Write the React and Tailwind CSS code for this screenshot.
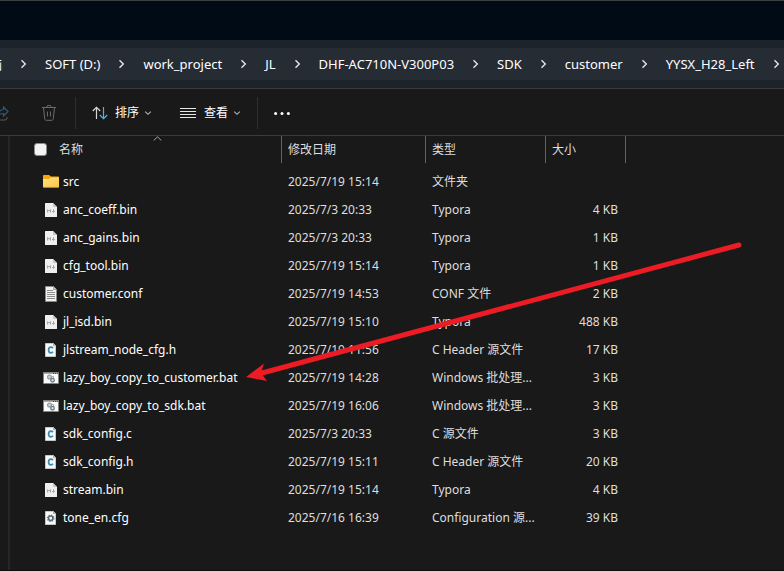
import { Fragment } from "react";

const FILES = [
  { icon: "folder", name: "src", date: "2025/7/19 15:14", type: "文件夹", size: "" },
  { icon: "md", name: "anc_coeff.bin", date: "2025/7/3 20:33", type: "Typora", size: "4 KB" },
  { icon: "md", name: "anc_gains.bin", date: "2025/7/3 20:33", type: "Typora", size: "1 KB" },
  { icon: "md", name: "cfg_tool.bin", date: "2025/7/19 15:14", type: "Typora", size: "1 KB" },
  { icon: "text", name: "customer.conf", date: "2025/7/19 14:53", type: "CONF 文件", size: "2 KB" },
  { icon: "md", name: "jl_isd.bin", date: "2025/7/19 15:10", type: "Typora", size: "488 KB" },
  { icon: "c", name: "jlstream_node_cfg.h", date: "2025/7/19 11:56", type: "C Header 源文件", size: "17 KB" },
  { icon: "bat", name: "lazy_boy_copy_to_customer.bat", date: "2025/7/19 14:28", type: "Windows 批处理...", size: "3 KB" },
  { icon: "bat", name: "lazy_boy_copy_to_sdk.bat", date: "2025/7/19 16:06", type: "Windows 批处理...", size: "3 KB" },
  { icon: "c", name: "sdk_config.c", date: "2025/7/3 20:33", type: "C 源文件", size: "3 KB" },
  { icon: "c", name: "sdk_config.h", date: "2025/7/19 15:11", type: "C Header 源文件", size: "20 KB" },
  { icon: "md", name: "stream.bin", date: "2025/7/19 15:14", type: "Typora", size: "4 KB" },
  { icon: "cfg", name: "tone_en.cfg", date: "2025/7/16 16:39", type: "Configuration 源...", size: "39 KB" },
];

const CRUMBS = ["SOFT (D:)", "work_project", "JL", "DHF-AC710N-V300P03", "SDK", "customer", "YYSX_H28_Left"];

function Chevron() {
  return (
    <svg className="h-3 w-[7px] shrink-0" viewBox="0 0 7 12" fill="none" stroke="#e4e5e6" strokeWidth="1.4" aria-hidden="true">
      <path d="M1.500 2.200 5.300 6 1.500 9.800" />
    </svg>
  );
}

function DownChevron() {
  return (
    <svg className="h-2 w-2 shrink-0" viewBox="0 0 8 8" fill="none" stroke="#b4b4b4" strokeWidth="1.1" aria-hidden="true">
      <path d="M1.2 2.6 4 5.3l2.8-2.7" />
    </svg>
  );
}

function FileIcon({ kind }) {
  return (
    <svg className="h-4 w-4 shrink-0" viewBox="0 0 16 16" aria-hidden="true">
      {kind === "folder" && (
        <>
          <defs>
            <linearGradient id="folderFront" x1="0" y1="0" x2="1" y2="1">
              <stop offset="0" stopColor="#ffe08a" />
              <stop offset="1" stopColor="#fdc53d" />
            </linearGradient>
          </defs>
          <path d="M0 2C0 1.400.5 1 1 1h5l2 1.500h7c.6 0 1 .4 1 1V7H0z" fill="#f3a70d" />
          <path d="M0 5h6l1.800-1.500H16V12.500c0 .6-.4 1-1 1H1c-.6 0-1-.4-1-1z" fill="url(#folderFront)" />
          <path d="M.4 13.300h15.200" stroke="#d99b1f" strokeWidth=".6" />
        </>
      )}
      {kind === "md" && (
        <>
          <path d="M2.600 1H10l4 4v9.400a.6.6 0 0 1-.6.6H2.600a.6.600 0 0 1-.6-.6V1.600A.6.6 0 0 1 2.600 1z" fill="#efefef" />
          <path d="M10 1v3.400c0 .4.200.6.6.6H14z" fill="#c6c6c6" />
          <path d="M4.500 10.500V7.500L6 9.200l1.500-1.700v3M10.500 7.200v3M9 9l1.500 1.500L12 9" fill="none" stroke="#a8a8a8" />
        </>
      )}
      {kind === "text" && (
        <>
          <path d="M2.500.5h8l3 3v12h-11z" fill="#f1f1ef" stroke="#8b8b88" />
          <path d="M10.500.5v3h3" fill="#c9c9c6" stroke="#8b8b88" strokeWidth=".7" />
          <path d="M4 4.500h6M4 6.500h8M4 8.500h8M4 10.500h8M4 12.500h8" stroke="#8f8f8d" />
        </>
      )}
      {kind === "c" && (
        <>
          <path d="M2.500 1.500h8l2 2v11h-10z" fill="#f7f9fa" stroke="#c3c8c9" />
          <path d="M10 1v3h3z" fill="#a9afb1" />
          <path d="M10 6.100C9.400 5.400 8.700 5.100 7.900 5.100 6.500 5.100 5.600 6.200 5.600 7.900s.9 2.900 2.300 2.900c.9 0 1.600-.3 2.100-1" fill="none" stroke="#3f8cae" strokeWidth="1.700" />
        </>
      )}
      {kind === "bat" && (
        <>
          <path d="M.5 2.500h15v11H.5z" fill="#fbfbfb" stroke="#85857f" />
          <path d="M1 3.500h14" stroke="#aaa9a3" />
          <path d="M10 3.500h1M12 3.500h1M14 3.500h1" stroke="#4c4c4c" />
          <circle cx="6.500" cy="7" r="1.900" fill="#cfd5d8" stroke="#93a0a6" strokeWidth="1.300" />
          <circle cx="9.500" cy="10.200" r="1.800" fill="#dfe3e5" stroke="#6f7b81" strokeWidth="1.300" />
          <path d="M9 6.500h1.500v1.500" fill="none" stroke="#a3adb2" />
        </>
      )}
      {kind === "cfg" && (
        <>
          <path d="M2.500 1.500h8l2 2v11h-10z" fill="#f7f9fa" stroke="#c3c8c9" />
          <path d="M10 1v3h3z" fill="#a9afb1" />
          <circle cx="7.700" cy="8.300" r="2.200" fill="none" stroke="#5b6b72" strokeWidth="1.500" />
          <circle cx="7.700" cy="8.300" r="3.200" fill="none" stroke="#5b6b72" strokeWidth="1.200" strokeDasharray="1.250 1.260" />
        </>
      )}
    </svg>
  );
}

function Toolbar() {
  return (
    <div className="flex h-[46px] items-center overflow-hidden pt-[2px]">
      <button type="button" aria-label="共享" className="w-[9px] shrink-0 overflow-hidden">
        <svg className="float-right h-4 w-4" viewBox="0 0 16 16" fill="none" aria-hidden="true">
          <path d="M5 3.500H3a2 2 0 0 0-2 2V13a2 2 0 0 0 2 2h9a2 2 0 0 0 2-2v-1" stroke="#5a5a5a" />
          <path d="M10.500 2 15 6.500l-4.500 4.500V8.500C8 8.500 6 9.300 4.500 11 5 7.500 7.500 4.800 10.500 4.500z" stroke="#2c5a74" strokeWidth="1.200" />
        </svg>
      </button>
      <button type="button" aria-label="删除" className="ml-8 shrink-0">
        <svg className="h-4 w-4" viewBox="0 0 16 16" fill="none" stroke="#6b6b6b" aria-hidden="true">
          <path d="M1 2.500h14M5.800 2.500V2a2.200 1.700 0 0 1 4.400 0v.5M2.500 2.500l1.200 11.300c.1.900.7 1.500 1.600 1.500h5.400c.9 0 1.500-.6 1.600-1.500L13.500 2.500M6.500 6.500v5M9.500 6.500v5" />
        </svg>
      </button>
      <div className="ml-[18px] h-8 w-px shrink-0 bg-[#2f2f2f]" />
      <button type="button" className="ml-4 flex shrink-0 items-center text-[#ffffff]">
        <svg className="h-4 w-4" viewBox="0 0 16 16" fill="none" strokeWidth="1.200" aria-hidden="true">
          <path d="M4.500 14V2.500M.8 6l3.700-3.700L8.200 6" stroke="#d8d8d8" />
          <path d="M11.500 2v11.500M7.800 10l3.700 3.700L15.200 10" stroke="#4cb4ec" />
        </svg>
        <span className="mr-[5px] ml-[7px]">排序</span>
        <DownChevron />
      </button>
      <button type="button" className="ml-7 flex shrink-0 items-center text-[#ffffff]">
        <svg className="h-4 w-4" viewBox="0 0 16 16" stroke="#e6e6e6" aria-hidden="true">
          <path d="M0 3.500h16M0 6.500h16M0 9.500h16M0 12.500h16" />
        </svg>
        <span className="mr-[5px] ml-2">查看</span>
        <DownChevron />
      </button>
      <div className="ml-4 h-8 w-px shrink-0 bg-[#2f2f2f]" />
      <button type="button" aria-label="更多" className="ml-4 shrink-0">
        <svg className="h-4 w-4" viewBox="0 0 16 16" fill="#ffffff" aria-hidden="true">
          <circle cx="1.600" cy="8.500" r="1.500" />
          <circle cx="8" cy="8.500" r="1.500" />
          <circle cx="14.400" cy="8.500" r="1.500" />
        </svg>
      </button>
    </div>
  );
}

export default function App() {
  return (
    <div className="relative flex min-h-screen flex-col overflow-hidden border-t border-b border-t-[#3c3f41] border-b-[#0c0c0c] bg-[#191919] font-['Noto_Sans','Noto_Sans_CJK_SC',sans-serif] text-[12px] leading-4 text-[#dedede]">
      <div className="h-[39px] bg-[#010b16]" />
      <div className="border-b border-[#3b3b3b] bg-[#1c232b] py-2">
        <nav aria-label="路径" className="flex h-8 items-center gap-[18px] overflow-hidden bg-[#262c34] text-[13px] whitespace-nowrap text-[#ffffff]">
          <span className="flex w-[2px] shrink-0 justify-end">
            <button type="button" className="shrink-0">脑</button>
          </span>
          <Chevron />
          {CRUMBS.map((crumb) => (
            <Fragment key={crumb}>
              <button type="button" className="shrink-0">{crumb}</button>
              <Chevron />
            </Fragment>
          ))}
        </nav>
      </div>
      <Toolbar />
      <main className="flex flex-1 border-t border-[#3b3b3b]">
        <div className="w-[10px] shrink-0 border-r-2 border-[#272727]" />
        <div className="relative flex-1">
          <svg className="absolute top-0 left-[143px] h-[5px] w-[9px]" viewBox="0 0 9 5" fill="none" stroke="#a8a8a8" aria-hidden="true">
            <path d="M.7 4.500 4.500.8l3.800 3.700" />
          </svg>
          <table className="w-full table-fixed border-collapse text-left whitespace-nowrap">
            <colgroup>
              <col className="w-[272px]" />
              <col className="w-[144px]" />
              <col className="w-[120px]" />
              <col className="w-[80px]" />
              <col />
            </colgroup>
            <thead>
              <tr className="h-8 align-top">
                <th className="p-0 font-normal">
                  <div className="flex h-[27px] items-center border-r border-[#636363] pl-6">
                    <input type="checkbox" aria-label="全选" className="h-[13px] w-[13px] appearance-none rounded-[3px] border border-[#8a8a8a] bg-[#f3f3f3]" />
                    <span className="ml-3">名称</span>
                  </div>
                </th>
                {["修改日期", "类型", "大小"].map((label) => (
                  <th key={label} className="p-0 font-normal">
                    <div className="flex h-[27px] items-center border-r border-[#636363] pl-[6px]">{label}</div>
                  </th>
                ))}
                <th className="p-0" />
              </tr>
            </thead>
            <tbody>
              {FILES.map((file) => (
                <tr key={file.name} className="h-7">
                  <td className="p-0 text-[#ffffff]">
                    <div className="flex items-center gap-1 pl-[33px]">
                      <FileIcon kind={file.icon} />
                      <span>{file.name}</span>
                    </div>
                  </td>
                  <td className="p-0 pl-[6px]">{file.date}</td>
                  <td className="p-0 pl-[6px]">{file.type}</td>
                  <td className="p-0 pr-2 text-right">{file.size}</td>
                  <td className="p-0" />
                </tr>
              ))}
            </tbody>
          </table>
          <svg className="pointer-events-none absolute top-[105px] left-[236px] h-[143px] w-[500px]" viewBox="246 241 500 143" aria-hidden="true">
            <path d="M262 373 739 245" stroke="#ed1c24" strokeWidth="5" strokeLinecap="round" />
            <path d="M246 377 264 363.500 261 373 267 381z" fill="#ed1c24" />
          </svg>
        </div>
      </main>
    </div>
  );
}
